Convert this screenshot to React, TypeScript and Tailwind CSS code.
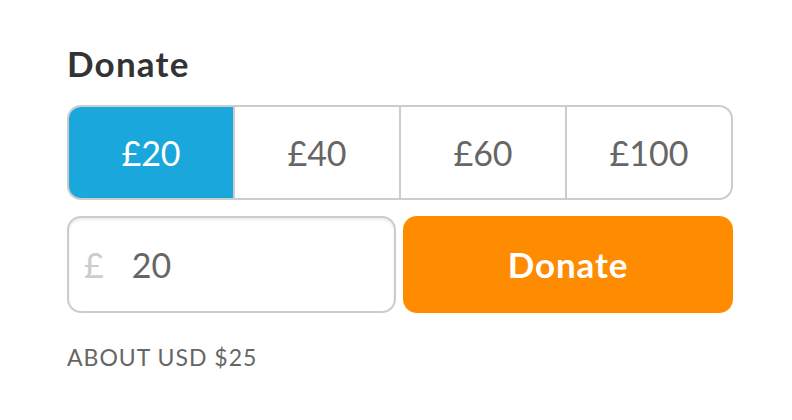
import React from "react";

export default function App() {
  const amounts = ["£20", "£40", "£60", "£100"];
  return (
    <div className="w-[792px] h-[420px] bg-white" style={{ fontFamily: "Lato, 'Open Sans', sans-serif" }}>
      <div className="pl-[67px] pr-[59px] pt-[41px]">
        <h1 className="text-[35px] leading-[44px] font-bold text-[#333333] tracking-[1.2px]">Donate</h1>
        <div className="mt-[20px] flex h-[95px] rounded-[14px] border-2 border-[#cccccc] overflow-hidden">
          {amounts.map((a, i) => (
            <div
              key={a}
              className={
                i === 0
                  ? "flex-1 flex items-center justify-center bg-[#1aa7dc] text-white text-[34px]"
                  : "flex-1 flex items-center justify-center border-l-2 border-[#cccccc] text-[#666666] text-[34px]"
              }
            >
              {a}
            </div>
          ))}
        </div>
        <div className="mt-[16px] flex gap-[7px] h-[97px]">
          <div className="w-[329px] flex items-center rounded-[14px] border-2 border-[#cccccc] shadow-[inset_0_2px_3px_rgba(0,0,0,0.08)]">
            <span className="ml-[15px] text-[34px] text-[#cccccc]">£</span>
            <span className="ml-[28px] text-[34px] text-[#666666]">20</span>
          </div>
          <button className="flex-1 flex items-center justify-center rounded-[14px] bg-[#ff8c00] text-white text-[35px] font-bold tracking-[0.9px]">
            Donate
          </button>
        </div>
        <div className="mt-[29px] text-[23px] leading-[30px] text-[#666666] tracking-[1px]">ABOUT USD $25</div>
      </div>
    </div>
  );
}
